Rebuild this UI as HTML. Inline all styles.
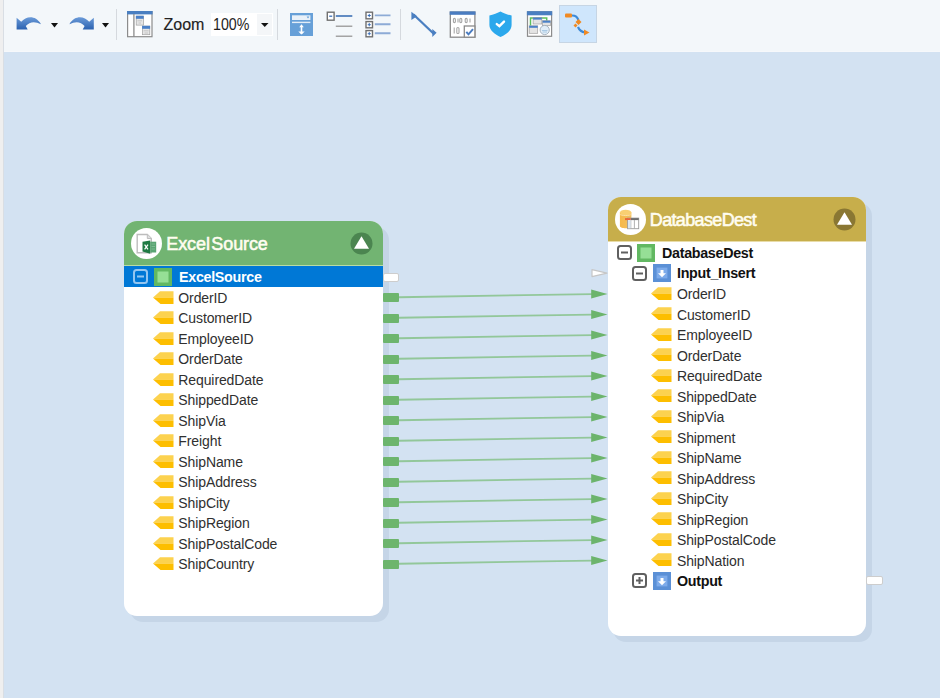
<!DOCTYPE html>
<html><head><meta charset="utf-8"><style>
html,body{margin:0;padding:0;width:940px;height:698px;overflow:hidden;background:#d3e2f2}
.a{position:absolute}
.t{position:absolute;font-family:"Liberation Sans", sans-serif;white-space:nowrap;line-height:20px}
.n{font-size:14px;letter-spacing:-0.1px;color:#303030;margin-top:-0.5px}
.b{font-size:14.3px;letter-spacing:-0.3px;font-weight:bold;color:#111;margin-top:-1px}
.w{color:#fff}
.hdr{font-size:18px;color:#fffdf0;line-height:23px;-webkit-text-stroke:0.55px #fffdf0}
</style></head><body>
<div class="a" style="left:0;top:0;width:3px;height:698px;background:#efefef"></div><div class="a" style="left:3px;top:0;width:1px;height:698px;background:#d9dee4"></div><div class="a" style="left:4px;top:0;width:936px;height:52px;background:#f3f7fa"></div><div class="a" style="left:4px;top:51px;width:936px;height:1px;background:#f6f8fb"></div><div class="a" style="left:4px;top:52px;width:936px;height:646px;background:#d3e2f2"></div><svg class="a" style="left:14px;top:12px" width="30" height="22" viewBox="0 0 30 22">
<defs><linearGradient id="ug" x1="0" y1="0" x2="0" y2="1"><stop offset="0" stop-color="#6a9ad8"/><stop offset="1" stop-color="#2b62b0"/></linearGradient></defs>
<path d="M2.6 5.8 L7.2 9.8 C12 4.5 21 2.5 27 12.2 C21 9 15.5 9.5 11.8 14 L13.7 17.5 L2.6 17.5Z" fill="url(#ug)"/></svg><svg class="a" style="left:51px;top:23px" width="8" height="5" viewBox="0 0 8 5"><path d="M0 0 H7 L3.5 4.5Z" fill="#111"/></svg><svg class="a" style="left:67px;top:12px" width="30" height="22" viewBox="0 0 30 22">
<path d="M26.8 5.8 L22.2 9.8 C17.4 4.5 8.4 2.5 2.4 12.2 C8.4 9 13.9 9.5 17.6 14 L15.7 17.5 L26.8 17.5Z" fill="url(#ug)"/></svg><svg class="a" style="left:102px;top:23px" width="8" height="5" viewBox="0 0 8 5"><path d="M0 0 H7 L3.5 4.5Z" fill="#111"/></svg><div class="a" style="left:116px;top:9px;width:1px;height:31px;background:#d5d9de"></div><div class="a" style="left:277px;top:9px;width:1px;height:31px;background:#d5d9de"></div><div class="a" style="left:400px;top:9px;width:1px;height:31px;background:#d5d9de"></div><svg class="a" style="left:127px;top:11px" width="26" height="27" viewBox="0 0 26 27">
<rect x="0.6" y="0.6" width="24.4" height="25.1" fill="#fff" stroke="#8c8c8c" stroke-width="1.2"/>
<rect x="0" y="0" width="25.6" height="3.4" fill="#4a7fc1"/>
<path d="M6.9 3 V26" stroke="#8c8c8c" stroke-width="1.3"/>
<rect x="9.2" y="5.1" width="7.2" height="9" fill="#e6e6e6" stroke="#a0a0a0" stroke-width="0.7"/><rect x="8.9" y="4.8" width="7.8" height="3" fill="#4a80c8"/>
<path d="M10.5 9.8 H15 M11.5 12 H14" stroke="#bdbdbd" stroke-width="0.8"/>
<rect x="15.4" y="15.1" width="7.4" height="8.6" fill="#e6e6e6" stroke="#a0a0a0" stroke-width="0.7"/><rect x="15.1" y="14.8" width="8" height="3" fill="#4a80c8"/>
<path d="M16.7 19.8 H21.5 M17.5 22 H21" stroke="#bdbdbd" stroke-width="0.8"/>
</svg><div class="t" style="left:163.5px;top:15px;font-size:16px;color:#222;-webkit-text-stroke:0.15px #222">Zoom</div><div class="a" style="left:211px;top:13px;width:62px;height:23px;background:#fff"></div><div class="a" style="left:257px;top:14px;width:15px;height:21px;background:#f4f6f8"></div><div class="t" style="left:212.5px;top:13.9px;font-size:16.5px;color:#222;transform:scaleX(0.86);transform-origin:0 0">100%</div><svg class="a" style="left:261px;top:22.7px" width="8" height="5" viewBox="0 0 8 5"><path d="M0 0 H7.5 L3.75 4Z" fill="#111"/></svg><svg class="a" style="left:289.5px;top:12.5px" width="23" height="23" viewBox="0 0 23 23">
<rect width="23" height="23" fill="#67a0d8"/>
<rect x="2" y="2.3" width="18.4" height="4.7" fill="#e9f1f9"/>
<path d="M16.6 3.6 L19.4 3.6 L18 5.6Z" fill="#67a0d8"/>
<rect x="2" y="8.7" width="18.4" height="1.4" fill="#e3edf7"/>
<path d="M11.5 13 V21" stroke="#fff" stroke-width="1.6"/>
<path d="M9.2 14.2 L11.5 11.3 L13.8 14.2Z M8.3 18.4 L11.5 21.6 L14.7 18.4Z" fill="#fff"/>
</svg><svg class="a" style="left:326px;top:11px" width="28" height="28" viewBox="0 0 28 28">
<rect x="1.3" y="1.2" width="6.8" height="8" fill="#fff" stroke="#707070" stroke-width="1.4"/>
<path d="M3.2 5.2 H6.2" stroke="#3a6fb8" stroke-width="1.3"/>
<path d="M9.8 5 H26.3" stroke="#5a86c0" stroke-width="1.9"/>
<path d="M9.8 15.3 H26.3 M9.8 25.3 H26.3" stroke="#a4a4a4" stroke-width="1.5"/>
</svg><svg class="a" style="left:364px;top:11px" width="28" height="28" viewBox="0 0 28 28">
<g stroke="#707070" stroke-width="1.4" fill="#fff">
<rect x="2" y="1.2" width="6.5" height="6.6"/><rect x="2" y="10.6" width="6.5" height="6.2"/><rect x="2" y="19.6" width="6.5" height="6.2"/></g>
<g stroke="#3a6fb8" stroke-width="1"><path d="M3.7 4.5 H6.8 M5.25 2.9 V6.1 M3.7 13.7 H6.8 M5.25 12.1 V15.3 M3.7 22.7 H6.8 M5.25 21.1 V24.3"/></g>
<path d="M10.8 4.4 H26.5 M10.8 13.3 H26.5 M10.8 22.2 H26.5" stroke="#8dabd6" stroke-width="1.9"/>
</svg><svg class="a" style="left:410px;top:11px" width="28" height="27" viewBox="0 0 28 27">
<path d="M3.5 3.5 L23.5 22.5" stroke="#4a7fc1" stroke-width="2.3"/>
<path d="M1.4 0.7 L7 5.2 L1.4 8.9Z M22.3 18 L26.6 21.8 L22.3 26Z" fill="#4a7fc1"/>
</svg><svg class="a" style="left:449px;top:11px" width="28" height="28" viewBox="0 0 28 28">
<rect x="1.3" y="1.1" width="24.6" height="25.1" fill="#fff" stroke="#8a8a8a" stroke-width="1.3"/>
<rect x="0.7" y="0.4" width="25.8" height="3.4" fill="#4a7cc0"/>
<g fill="none" stroke="#a6a6a6" stroke-width="1.1">
<rect x="4.4" y="7.4" width="2" height="4.2" rx="1"/><path d="M9 7.4 V11.6"/><rect x="10.8" y="7.4" width="2" height="4.2" rx="1"/>
<rect x="16.2" y="7.4" width="2" height="4.2" rx="1"/><path d="M21 7.4 V11.6"/>
<path d="M5.2 16.5 V22.5"/><rect x="7.8" y="16.5" width="2.2" height="6" rx="1.1"/>
</g>
<rect x="15.3" y="15" width="10.6" height="11.2" fill="#fff" stroke="#8a8a8a" stroke-width="1.3"/>
<path d="M17.3 20.8 L19.5 23.3 L24 18.2" stroke="#4a7cc0" stroke-width="2" fill="none"/>
</svg><svg class="a" style="left:489px;top:11px" width="23" height="26" viewBox="0 0 23 26">
<path d="M11.5 0.4 C14 1.8 19 3.6 22.6 4.6 V14 C22.6 19.5 17 23.5 11.5 25.9 C6 23.5 0.4 19.5 0.4 14 V4.6 C4 3.6 9 1.8 11.5 0.4Z" fill="#2ba8ec"/>
<path d="M7.8 13.1 L10.4 15.1 L15 10.6" stroke="#fff" stroke-width="2.4" fill="none" stroke-linecap="round"/>
</svg><svg class="a" style="left:526px;top:11px" width="27" height="27" viewBox="0 0 27 27">
<rect x="1.5" y="0.8" width="24.1" height="24.5" fill="#fff" stroke="#8c8c8c" stroke-width="1.2"/>
<rect x="0.9" y="0.2" width="25.3" height="4.1" fill="#4a7fc1"/>
<path d="M4.5 14.8 V7.1 H20.7 V10" stroke="#5cc05c" stroke-width="1.5" fill="none"/>
<rect x="7.1" y="6.6" width="8.7" height="6.4" fill="#e4e4e4" stroke="#a0a0a0" stroke-width="0.7"/><rect x="7.1" y="6.6" width="8.7" height="2" fill="#4a80c8"/>
<rect x="16.6" y="9.7" width="7.8" height="5" fill="#e4e4e4" stroke="#a0a0a0" stroke-width="0.7"/><rect x="16.6" y="9.7" width="7.8" height="2" fill="#4a80c8"/>
<rect x="3.2" y="14.8" width="8.5" height="7.5" fill="#e4e4e4" stroke="#a0a0a0" stroke-width="0.7"/><rect x="3.2" y="14.8" width="8.5" height="2" fill="#4a80c8"/>
<circle cx="18.7" cy="19" r="4.6" fill="#e2eef8" stroke="#a8b4c0" stroke-width="1"/>
<path d="M16 19.5 H21.5 M16.5 21 H21" stroke="#9cc0e0" stroke-width="0.8"/>
</svg><div class="a" style="left:559px;top:5px;width:38px;height:38px;background:#cfe6fc;box-shadow:inset 0 0 0 1px #c6d5e4"></div><svg class="a" style="left:563px;top:11px" width="28" height="26" viewBox="0 0 28 26">
<rect x="2" y="2.5" width="7" height="4" rx="1" fill="#f08a24"/>
<path d="M9 4.5 C13 4.5 14 6 15.5 9" stroke="#3d8ad8" stroke-width="2.2" fill="none"/>
<path d="M15.5 8 L18.5 11 L15.5 14 L12.5 11Z" fill="#f08a24"/>
<path d="M12.5 12.5 L14.5 14.5 L12.5 16.5 L10.5 14.5Z" fill="#f08a24"/>
<path d="M15 16 C16.5 19.5 18 21 22 21.5" stroke="#3d8ad8" stroke-width="2.2" fill="none"/>
<path d="M21 18.5 L26.5 21.5 L21 24.5Z" fill="#f08a24"/>
</svg>

<div class="a" style="left:129.5px;top:226.5px;width:259px;height:395px;border-radius:13px;background:#c5d5e7"></div><div class="a" style="left:124px;top:221px;width:259px;height:395px;border-radius:13px;background:#fff;overflow:hidden"><div class="a" style="left:0;top:0;width:259px;height:44px;background:#72b472"></div><div class="a" style="left:0;top:44px;width:259px;height:1px;background:#b8dca4"></div></div><div class="a" style="left:131.0px;top:227.5px;width:31px;height:31px;border-radius:50%;background:#fff"></div><svg class="a" style="left:131px;top:228px" width="30" height="30" viewBox="0 0 30 30"><path d="M6.2 6.5 H16.3 L20.3 10.5 V24.8 H6.2Z" fill="#fff" stroke="#bdbdbd" stroke-width="1.4"/><path d="M16.3 6.5 V10.5 H20.3" fill="#e0e0e0" stroke="#bdbdbd" stroke-width="1"/><path d="M11.5 13.7 L19.2 12.5 V25.8 L11.5 23.4Z" fill="#1f7a43"/><rect x="19.2" y="13.7" width="6" height="10.8" fill="#5aa573"/><path d="M20.5 16 H24 M20.5 18.5 H24 M20.5 21 H24" stroke="#8cc49e" stroke-width="0.7"/><path d="M13.6 16.6 L17 21.4 M17 16.6 L13.6 21.4" stroke="#fff" stroke-width="1.2"/></svg><div class="t hdr" style="left:166.3px;top:232.8px;letter-spacing:-0.1px">Excel<span style="margin-left:1.5px"></span>Source</div><svg class="a" style="left:350.0px;top:231.8px" width="23" height="23" viewBox="0 0 23 23"><circle cx="11.5" cy="11.5" r="11" fill="#4b8550"/><path d="M11.5 4.2 L19 16.8 H4Z" fill="#fff"/></svg><div class="a" style="left:613.0px;top:202.5px;width:258.5px;height:439px;border-radius:13px;background:#c5d5e7"></div><div class="a" style="left:607.5px;top:197px;width:258.5px;height:439px;border-radius:13px;background:#fff;overflow:hidden"><div class="a" style="left:0;top:0;width:258.5px;height:44px;background:#c7ae4b"></div><div class="a" style="left:0;top:44px;width:258.5px;height:1px;background:#e8dca8"></div></div><div class="a" style="left:614.5px;top:203.5px;width:31px;height:31px;border-radius:50%;background:#fff"></div><svg class="a" style="left:614px;top:204px" width="30" height="30" viewBox="0 0 30 30"><defs><linearGradient id="dbg" x1="0" x2="1"><stop offset="0" stop-color="#f6b84a"/><stop offset="1" stop-color="#f2c060"/></linearGradient></defs><path d="M5.9 8.5 V22 C5.9 25 17.4 25 17.4 22 V8.5Z" fill="url(#dbg)"/><ellipse cx="11.65" cy="8.5" rx="5.75" ry="2.8" fill="#f9cf72"/><path d="M5.9 10.2 C7 12 16.3 12 17.4 10.2" stroke="#fde9b8" stroke-width="0.8" fill="none"/><rect x="13.6" y="14.1" width="11.1" height="10.6" fill="#fff" stroke="#9a9a9a" stroke-width="0.9"/><rect x="11" y="14.1" width="5.8" height="2" fill="#e8663a"/><rect x="16.8" y="14.1" width="7.9" height="2" fill="#6e6e6e"/><path d="M16.8 16 V24.7 M20.4 16 V24.7" stroke="#a8a8a8" stroke-width="0.9"/><rect x="14" y="16.2" width="2.6" height="8" fill="#dbe6f2"/></svg><div class="t hdr" style="left:649.8px;top:208.8px;letter-spacing:-0.65px">DatabaseDest</div><svg class="a" style="left:833.0px;top:207.8px" width="23" height="23" viewBox="0 0 23 23"><circle cx="11.5" cy="11.5" r="11" fill="#8a7733"/><path d="M11.5 4.2 L19 16.8 H4Z" fill="#fff"/></svg><div class="a" style="left:124px;top:266px;width:259px;height:20.8px;background:#0078d6"></div><svg class="a" style="left:133.10px;top:269.35px" width="15" height="15" viewBox="0 0 15 15"><rect x="1" y="1" width="13" height="13" rx="2.5" fill="#0078d6" stroke="#94c6f0" stroke-width="2"/><path d="M4 7.5 H11" stroke="#94c6f0" stroke-width="2"/></svg><svg class="a" style="left:153.70px;top:267.95px" width="18" height="18" viewBox="0 0 18 18"><rect x="0" y="0" width="18" height="18" fill="#62b862"/><rect x="3.5" y="3.5" width="11" height="11" fill="#96df96"/></svg><div class="t b w" style="left:179px;top:267.75px">ExcelSource</div><svg class="a" style="left:152.5px;top:290.65px" width="21" height="13" viewBox="0 0 21 13"><path d="M0 6.6 L7 0.2 H20.5 V6.6 Z" fill="#fcd24f"/><path d="M0 6.5 H20.5 V12.9 H7.5 Z" fill="#fdbe00"/></svg><div class="t n" style="left:178.3px;top:288.25px">OrderID</div><svg class="a" style="left:152.5px;top:311.15px" width="21" height="13" viewBox="0 0 21 13"><path d="M0 6.6 L7 0.2 H20.5 V6.6 Z" fill="#fcd24f"/><path d="M0 6.5 H20.5 V12.9 H7.5 Z" fill="#fdbe00"/></svg><div class="t n" style="left:178.3px;top:308.75px">CustomerID</div><svg class="a" style="left:152.5px;top:331.65px" width="21" height="13" viewBox="0 0 21 13"><path d="M0 6.6 L7 0.2 H20.5 V6.6 Z" fill="#fcd24f"/><path d="M0 6.5 H20.5 V12.9 H7.5 Z" fill="#fdbe00"/></svg><div class="t n" style="left:178.3px;top:329.25px">EmployeeID</div><svg class="a" style="left:152.5px;top:352.15px" width="21" height="13" viewBox="0 0 21 13"><path d="M0 6.6 L7 0.2 H20.5 V6.6 Z" fill="#fcd24f"/><path d="M0 6.5 H20.5 V12.9 H7.5 Z" fill="#fdbe00"/></svg><div class="t n" style="left:178.3px;top:349.75px">OrderDate</div><svg class="a" style="left:152.5px;top:372.65px" width="21" height="13" viewBox="0 0 21 13"><path d="M0 6.6 L7 0.2 H20.5 V6.6 Z" fill="#fcd24f"/><path d="M0 6.5 H20.5 V12.9 H7.5 Z" fill="#fdbe00"/></svg><div class="t n" style="left:178.3px;top:370.25px">RequiredDate</div><svg class="a" style="left:152.5px;top:393.15px" width="21" height="13" viewBox="0 0 21 13"><path d="M0 6.6 L7 0.2 H20.5 V6.6 Z" fill="#fcd24f"/><path d="M0 6.5 H20.5 V12.9 H7.5 Z" fill="#fdbe00"/></svg><div class="t n" style="left:178.3px;top:390.75px">ShippedDate</div><svg class="a" style="left:152.5px;top:413.65px" width="21" height="13" viewBox="0 0 21 13"><path d="M0 6.6 L7 0.2 H20.5 V6.6 Z" fill="#fcd24f"/><path d="M0 6.5 H20.5 V12.9 H7.5 Z" fill="#fdbe00"/></svg><div class="t n" style="left:178.3px;top:411.25px">ShipVia</div><svg class="a" style="left:152.5px;top:434.15px" width="21" height="13" viewBox="0 0 21 13"><path d="M0 6.6 L7 0.2 H20.5 V6.6 Z" fill="#fcd24f"/><path d="M0 6.5 H20.5 V12.9 H7.5 Z" fill="#fdbe00"/></svg><div class="t n" style="left:178.3px;top:431.75px">Freight</div><svg class="a" style="left:152.5px;top:454.65px" width="21" height="13" viewBox="0 0 21 13"><path d="M0 6.6 L7 0.2 H20.5 V6.6 Z" fill="#fcd24f"/><path d="M0 6.5 H20.5 V12.9 H7.5 Z" fill="#fdbe00"/></svg><div class="t n" style="left:178.3px;top:452.25px">ShipName</div><svg class="a" style="left:152.5px;top:475.15px" width="21" height="13" viewBox="0 0 21 13"><path d="M0 6.6 L7 0.2 H20.5 V6.6 Z" fill="#fcd24f"/><path d="M0 6.5 H20.5 V12.9 H7.5 Z" fill="#fdbe00"/></svg><div class="t n" style="left:178.3px;top:472.75px">ShipAddress</div><svg class="a" style="left:152.5px;top:495.65px" width="21" height="13" viewBox="0 0 21 13"><path d="M0 6.6 L7 0.2 H20.5 V6.6 Z" fill="#fcd24f"/><path d="M0 6.5 H20.5 V12.9 H7.5 Z" fill="#fdbe00"/></svg><div class="t n" style="left:178.3px;top:493.25px">ShipCity</div><svg class="a" style="left:152.5px;top:516.15px" width="21" height="13" viewBox="0 0 21 13"><path d="M0 6.6 L7 0.2 H20.5 V6.6 Z" fill="#fcd24f"/><path d="M0 6.5 H20.5 V12.9 H7.5 Z" fill="#fdbe00"/></svg><div class="t n" style="left:178.3px;top:513.75px">ShipRegion</div><svg class="a" style="left:152.5px;top:536.65px" width="21" height="13" viewBox="0 0 21 13"><path d="M0 6.6 L7 0.2 H20.5 V6.6 Z" fill="#fcd24f"/><path d="M0 6.5 H20.5 V12.9 H7.5 Z" fill="#fdbe00"/></svg><div class="t n" style="left:178.3px;top:534.25px">ShipPostalCode</div><svg class="a" style="left:152.5px;top:557.15px" width="21" height="13" viewBox="0 0 21 13"><path d="M0 6.6 L7 0.2 H20.5 V6.6 Z" fill="#fcd24f"/><path d="M0 6.5 H20.5 V12.9 H7.5 Z" fill="#fdbe00"/></svg><div class="t n" style="left:178.3px;top:554.75px">ShipCountry</div><div class="a" style="left:383px;top:272.55px;width:14px;height:7px;background:#fff;border:1px solid #cdcdcd;border-radius:2px"></div><div class="a" style="left:383px;top:293.05px;width:16px;height:9px;background:#6db56d;border-radius:1px"></div><div class="a" style="left:383px;top:313.55px;width:16px;height:9px;background:#6db56d;border-radius:1px"></div><div class="a" style="left:383px;top:334.05px;width:16px;height:9px;background:#6db56d;border-radius:1px"></div><div class="a" style="left:383px;top:354.55px;width:16px;height:9px;background:#6db56d;border-radius:1px"></div><div class="a" style="left:383px;top:375.05px;width:16px;height:9px;background:#6db56d;border-radius:1px"></div><div class="a" style="left:383px;top:395.55px;width:16px;height:9px;background:#6db56d;border-radius:1px"></div><div class="a" style="left:383px;top:416.05px;width:16px;height:9px;background:#6db56d;border-radius:1px"></div><div class="a" style="left:383px;top:436.55px;width:16px;height:9px;background:#6db56d;border-radius:1px"></div><div class="a" style="left:383px;top:457.05px;width:16px;height:9px;background:#6db56d;border-radius:1px"></div><div class="a" style="left:383px;top:477.55px;width:16px;height:9px;background:#6db56d;border-radius:1px"></div><div class="a" style="left:383px;top:498.05px;width:16px;height:9px;background:#6db56d;border-radius:1px"></div><div class="a" style="left:383px;top:518.55px;width:16px;height:9px;background:#6db56d;border-radius:1px"></div><div class="a" style="left:383px;top:539.05px;width:16px;height:9px;background:#6db56d;border-radius:1px"></div><div class="a" style="left:383px;top:559.55px;width:16px;height:9px;background:#6db56d;border-radius:1px"></div><svg class="a" style="left:617.20px;top:245.15px" width="15" height="15" viewBox="0 0 15 15"><rect x="1" y="1" width="13" height="13" rx="2.5" fill="#fff" stroke="#606060" stroke-width="2"/><path d="M4 7.5 H11" stroke="#606060" stroke-width="2"/></svg><svg class="a" style="left:637.20px;top:243.75px" width="18" height="18" viewBox="0 0 18 18"><rect x="0" y="0" width="18" height="18" fill="#62b862"/><rect x="3.5" y="3.5" width="11" height="11" fill="#96df96"/></svg><div class="t b" style="left:662.0px;top:243.55px">DatabaseDest</div><svg class="a" style="left:632.20px;top:265.65px" width="15" height="15" viewBox="0 0 15 15"><rect x="1" y="1" width="13" height="13" rx="2.5" fill="#fff" stroke="#606060" stroke-width="2"/><path d="M4 7.5 H11" stroke="#606060" stroke-width="2"/></svg><svg class="a" style="left:652.5px;top:264.25px" width="18" height="18" viewBox="0 0 18 18"><rect x="0" y="0" width="18" height="18" fill="#5b90d6"/><rect x="3.6" y="3.6" width="10.8" height="10.8" fill="#7dabea"/><path d="M9 6 V10" stroke="#fff" stroke-width="3"/><path d="M5 9.2 H13 L9 13.2Z" fill="#fff"/></svg><div class="t b" style="left:677.0px;top:264.05px">Input_Insert</div><svg class="a" style="left:650.8px;top:286.95px" width="21" height="13" viewBox="0 0 21 13"><path d="M0 6.6 L7 0.2 H20.5 V6.6 Z" fill="#fcd24f"/><path d="M0 6.5 H20.5 V12.9 H7.5 Z" fill="#fdbe00"/></svg><div class="t n" style="left:676.9px;top:284.55px">OrderID</div><svg class="a" style="left:650.8px;top:307.45px" width="21" height="13" viewBox="0 0 21 13"><path d="M0 6.6 L7 0.2 H20.5 V6.6 Z" fill="#fcd24f"/><path d="M0 6.5 H20.5 V12.9 H7.5 Z" fill="#fdbe00"/></svg><div class="t n" style="left:676.9px;top:305.05px">CustomerID</div><svg class="a" style="left:650.8px;top:327.95px" width="21" height="13" viewBox="0 0 21 13"><path d="M0 6.6 L7 0.2 H20.5 V6.6 Z" fill="#fcd24f"/><path d="M0 6.5 H20.5 V12.9 H7.5 Z" fill="#fdbe00"/></svg><div class="t n" style="left:676.9px;top:325.55px">EmployeeID</div><svg class="a" style="left:650.8px;top:348.45px" width="21" height="13" viewBox="0 0 21 13"><path d="M0 6.6 L7 0.2 H20.5 V6.6 Z" fill="#fcd24f"/><path d="M0 6.5 H20.5 V12.9 H7.5 Z" fill="#fdbe00"/></svg><div class="t n" style="left:676.9px;top:346.05px">OrderDate</div><svg class="a" style="left:650.8px;top:368.95px" width="21" height="13" viewBox="0 0 21 13"><path d="M0 6.6 L7 0.2 H20.5 V6.6 Z" fill="#fcd24f"/><path d="M0 6.5 H20.5 V12.9 H7.5 Z" fill="#fdbe00"/></svg><div class="t n" style="left:676.9px;top:366.55px">RequiredDate</div><svg class="a" style="left:650.8px;top:389.45px" width="21" height="13" viewBox="0 0 21 13"><path d="M0 6.6 L7 0.2 H20.5 V6.6 Z" fill="#fcd24f"/><path d="M0 6.5 H20.5 V12.9 H7.5 Z" fill="#fdbe00"/></svg><div class="t n" style="left:676.9px;top:387.05px">ShippedDate</div><svg class="a" style="left:650.8px;top:409.95px" width="21" height="13" viewBox="0 0 21 13"><path d="M0 6.6 L7 0.2 H20.5 V6.6 Z" fill="#fcd24f"/><path d="M0 6.5 H20.5 V12.9 H7.5 Z" fill="#fdbe00"/></svg><div class="t n" style="left:676.9px;top:407.55px">ShipVia</div><svg class="a" style="left:650.8px;top:430.45px" width="21" height="13" viewBox="0 0 21 13"><path d="M0 6.6 L7 0.2 H20.5 V6.6 Z" fill="#fcd24f"/><path d="M0 6.5 H20.5 V12.9 H7.5 Z" fill="#fdbe00"/></svg><div class="t n" style="left:676.9px;top:428.05px">Shipment</div><svg class="a" style="left:650.8px;top:450.95px" width="21" height="13" viewBox="0 0 21 13"><path d="M0 6.6 L7 0.2 H20.5 V6.6 Z" fill="#fcd24f"/><path d="M0 6.5 H20.5 V12.9 H7.5 Z" fill="#fdbe00"/></svg><div class="t n" style="left:676.9px;top:448.55px">ShipName</div><svg class="a" style="left:650.8px;top:471.45px" width="21" height="13" viewBox="0 0 21 13"><path d="M0 6.6 L7 0.2 H20.5 V6.6 Z" fill="#fcd24f"/><path d="M0 6.5 H20.5 V12.9 H7.5 Z" fill="#fdbe00"/></svg><div class="t n" style="left:676.9px;top:469.05px">ShipAddress</div><svg class="a" style="left:650.8px;top:491.95px" width="21" height="13" viewBox="0 0 21 13"><path d="M0 6.6 L7 0.2 H20.5 V6.6 Z" fill="#fcd24f"/><path d="M0 6.5 H20.5 V12.9 H7.5 Z" fill="#fdbe00"/></svg><div class="t n" style="left:676.9px;top:489.55px">ShipCity</div><svg class="a" style="left:650.8px;top:512.45px" width="21" height="13" viewBox="0 0 21 13"><path d="M0 6.6 L7 0.2 H20.5 V6.6 Z" fill="#fcd24f"/><path d="M0 6.5 H20.5 V12.9 H7.5 Z" fill="#fdbe00"/></svg><div class="t n" style="left:676.9px;top:510.05px">ShipRegion</div><svg class="a" style="left:650.8px;top:532.95px" width="21" height="13" viewBox="0 0 21 13"><path d="M0 6.6 L7 0.2 H20.5 V6.6 Z" fill="#fcd24f"/><path d="M0 6.5 H20.5 V12.9 H7.5 Z" fill="#fdbe00"/></svg><div class="t n" style="left:676.9px;top:530.55px">ShipPostalCode</div><svg class="a" style="left:650.8px;top:553.45px" width="21" height="13" viewBox="0 0 21 13"><path d="M0 6.6 L7 0.2 H20.5 V6.6 Z" fill="#fcd24f"/><path d="M0 6.5 H20.5 V12.9 H7.5 Z" fill="#fdbe00"/></svg><div class="t n" style="left:676.9px;top:551.05px">ShipNation</div><svg class="a" style="left:632.20px;top:573.15px" width="15" height="15" viewBox="0 0 15 15"><rect x="1" y="1" width="13" height="13" rx="2.5" fill="#fff" stroke="#606060" stroke-width="2"/><path d="M4 7.5 H11" stroke="#606060" stroke-width="2"/><path d="M7.5 4 V11" stroke="#606060" stroke-width="2"/></svg><svg class="a" style="left:652.5px;top:571.75px" width="18" height="18" viewBox="0 0 18 18"><rect x="0" y="0" width="18" height="18" fill="#5b90d6"/><rect x="3.6" y="3.6" width="10.8" height="10.8" fill="#7dabea"/><path d="M9 6 V10" stroke="#fff" stroke-width="3"/><path d="M5 9.2 H13 L9 13.2Z" fill="#fff"/></svg><div class="t b" style="left:677.0px;top:571.55px">Output</div><svg class="a" style="left:590px;top:267px" width="19" height="12" viewBox="0 0 19 12"><path d="M2 2.6 L17 6.2 L2 9.6Z" fill="#fff" stroke="#c6c6c6" stroke-width="1.2" stroke-linejoin="round"/></svg><div class="a" style="left:865.5px;top:575.95px;width:15px;height:7px;background:#fff;border:1px solid #cdcdcd;border-radius:2px"></div><svg class="a" style="left:0;top:0" width="940" height="698" viewBox="0 0 940 698"><line x1="399" y1="297.25" x2="592" y2="294.05" stroke="#7dbf7d" stroke-width="1.8" opacity="0.75"/><path d="M591.2 289.55 L607.5 294.05 L591.2 298.55Z" fill="#6cb46c"/><line x1="399" y1="317.75" x2="592" y2="314.55" stroke="#7dbf7d" stroke-width="1.8" opacity="0.75"/><path d="M591.2 310.05 L607.5 314.55 L591.2 319.05Z" fill="#6cb46c"/><line x1="399" y1="338.25" x2="592" y2="335.05" stroke="#7dbf7d" stroke-width="1.8" opacity="0.75"/><path d="M591.2 330.55 L607.5 335.05 L591.2 339.55Z" fill="#6cb46c"/><line x1="399" y1="358.75" x2="592" y2="355.55" stroke="#7dbf7d" stroke-width="1.8" opacity="0.75"/><path d="M591.2 351.05 L607.5 355.55 L591.2 360.05Z" fill="#6cb46c"/><line x1="399" y1="379.25" x2="592" y2="376.05" stroke="#7dbf7d" stroke-width="1.8" opacity="0.75"/><path d="M591.2 371.55 L607.5 376.05 L591.2 380.55Z" fill="#6cb46c"/><line x1="399" y1="399.75" x2="592" y2="396.55" stroke="#7dbf7d" stroke-width="1.8" opacity="0.75"/><path d="M591.2 392.05 L607.5 396.55 L591.2 401.05Z" fill="#6cb46c"/><line x1="399" y1="420.25" x2="592" y2="417.05" stroke="#7dbf7d" stroke-width="1.8" opacity="0.75"/><path d="M591.2 412.55 L607.5 417.05 L591.2 421.55Z" fill="#6cb46c"/><line x1="399" y1="440.75" x2="592" y2="437.55" stroke="#7dbf7d" stroke-width="1.8" opacity="0.75"/><path d="M591.2 433.05 L607.5 437.55 L591.2 442.05Z" fill="#6cb46c"/><line x1="399" y1="461.25" x2="592" y2="458.05" stroke="#7dbf7d" stroke-width="1.8" opacity="0.75"/><path d="M591.2 453.55 L607.5 458.05 L591.2 462.55Z" fill="#6cb46c"/><line x1="399" y1="481.75" x2="592" y2="478.55" stroke="#7dbf7d" stroke-width="1.8" opacity="0.75"/><path d="M591.2 474.05 L607.5 478.55 L591.2 483.05Z" fill="#6cb46c"/><line x1="399" y1="502.25" x2="592" y2="499.05" stroke="#7dbf7d" stroke-width="1.8" opacity="0.75"/><path d="M591.2 494.55 L607.5 499.05 L591.2 503.55Z" fill="#6cb46c"/><line x1="399" y1="522.75" x2="592" y2="519.55" stroke="#7dbf7d" stroke-width="1.8" opacity="0.75"/><path d="M591.2 515.05 L607.5 519.55 L591.2 524.05Z" fill="#6cb46c"/><line x1="399" y1="543.25" x2="592" y2="540.05" stroke="#7dbf7d" stroke-width="1.8" opacity="0.75"/><path d="M591.2 535.55 L607.5 540.05 L591.2 544.55Z" fill="#6cb46c"/><line x1="399" y1="563.75" x2="592" y2="560.55" stroke="#7dbf7d" stroke-width="1.8" opacity="0.75"/><path d="M591.2 556.05 L607.5 560.55 L591.2 565.05Z" fill="#6cb46c"/></svg></body></html>
